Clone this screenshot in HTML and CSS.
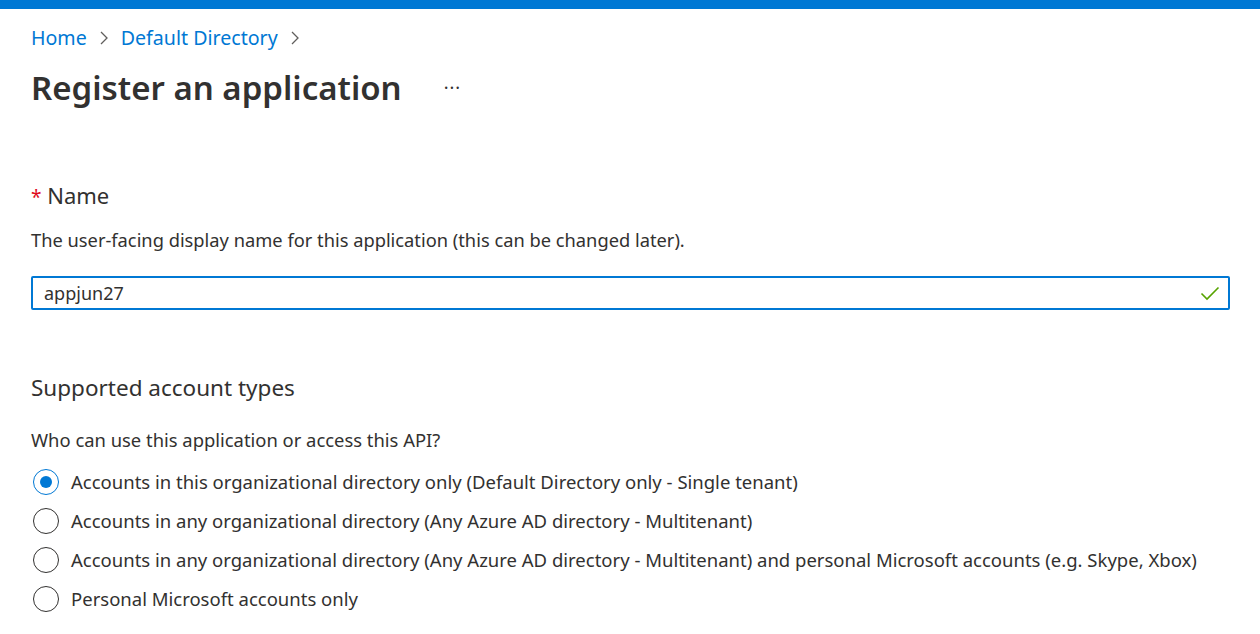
FILE: index.html
```html
<!DOCTYPE html>
<html>
<head>
<meta charset="utf-8">
<link rel="stylesheet" href="styles.css">
</head>
<body>
<div class="topbar"></div>
<main class="page">
  <nav class="crumbs">
    <a class="crumb">Home</a>
    <span class="chev"><svg width="10" height="16" viewBox="0 0 10 16"><path d="M2 2 L8 8 L2 14" fill="none" stroke="#605e5c" stroke-width="1.3"/></svg></span>
    <a class="crumb">Default Directory</a>
    <span class="chev"><svg width="10" height="16" viewBox="0 0 10 16"><path d="M2 2 L8 8 L2 14" fill="none" stroke="#605e5c" stroke-width="1.3"/></svg></span>
  </nav>
  <div class="titlerow">
    <h1 class="title">Register an application</h1>
    <span class="more">···</span>
  </div>

  <section class="field">
    <div class="label"><span class="req">*</span> Name</div>
    <div class="desc">The user-facing display name for this application (this can be changed later).</div>
    <div class="input">
      <span class="value">appjun27</span>
      <svg class="check" width="20" height="16" viewBox="0 0 20 16"><path d="M1.5 8.5 L7 14 L18.5 2.5" fill="none" stroke="#57a300" stroke-width="1.6"/></svg>
    </div>
  </section>

  <section class="accounts">
    <div class="heading">Supported account types</div>
    <div class="desc2">Who can use this application or access this API?</div>
    <div class="radios">
      <div class="radio"><span class="dot checked"></span><span>Accounts in this organizational directory only (Default Directory only - Single tenant)</span></div>
      <div class="radio"><span class="dot"></span><span>Accounts in any organizational directory (Any Azure AD directory - Multitenant)</span></div>
      <div class="radio"><span class="dot"></span><span>Accounts in any organizational directory (Any Azure AD directory - Multitenant) and personal Microsoft accounts (e.g. Skype, Xbox)</span></div>
      <div class="radio"><span class="dot"></span><span>Personal Microsoft accounts only</span></div>
    </div>
  </section>
</main>
</body>
</html>
```

FILE: styles.css
```css
* { box-sizing: border-box; }
html, body { margin: 0; padding: 0; background: #fff; }
body {
  font-family: "Noto Sans", "Open Sans", sans-serif;
  color: #323130;
  overflow: hidden;
}
.topbar { height: 9px; background: #0078d4; }
.page { padding: 0 30px 0 31px; }
.crumbs {
  display: flex;
  align-items: center;
  height: 40px;
  margin-top: 8px;
  font-size: 19.6px;
}
.crumb { color: #0078d4; text-decoration: none; }
.chev { display: inline-flex; margin: 0 12px 0 12px; padding-top: 2px; }
.titlerow { display: flex; align-items: center; height: 60px; }
.title {
  margin: 0;
  font-size: 33px;
  font-weight: 600;
  color: #323130;
}
.more { margin-left: 42px; font-size: 18px; color: #323130; letter-spacing: 1px; }
.field { margin-top: 60px; }
.label { font-size: 22px; height: 36px; line-height: 36px; }
.req { color: #e00b1c; font-size: 19px; }
.desc { font-size: 18.3px; margin-top: 15px; height: 24px; line-height: 24px; }
.input {
  margin-top: 24px;
  height: 34px;
  border: 2px solid #0078d4;
  border-radius: 2px;
  display: flex;
  align-items: center;
  justify-content: space-between;
  padding: 0 8px 0 11px;
}
.value { font-size: 18px; }
.check { display: block; }
.accounts { margin-top: 62px; }
.heading { font-size: 22.5px; height: 32px; line-height: 32px; }
.desc2 { font-size: 18.4px; margin-top: 23px; height: 26px; line-height: 26px; }
.radios { display: flex; flex-direction: column; margin-top: 9px; }
.radio { display: flex; align-items: center; height: 39px; font-size: 18.5px; }
.dot {
  width: 26px; height: 26px;
  border: 1.5px solid #323130;
  border-radius: 50%;
  margin-left: 2px;
  margin-right: 12px;
  flex: none;
  display: flex; align-items: center; justify-content: center;
}
.dot.checked { border-color: #0078d4; }
.dot.checked::after {
  content: "";
  width: 12px; height: 12px;
  border-radius: 50%;
  background: #0078d4;
}
```
